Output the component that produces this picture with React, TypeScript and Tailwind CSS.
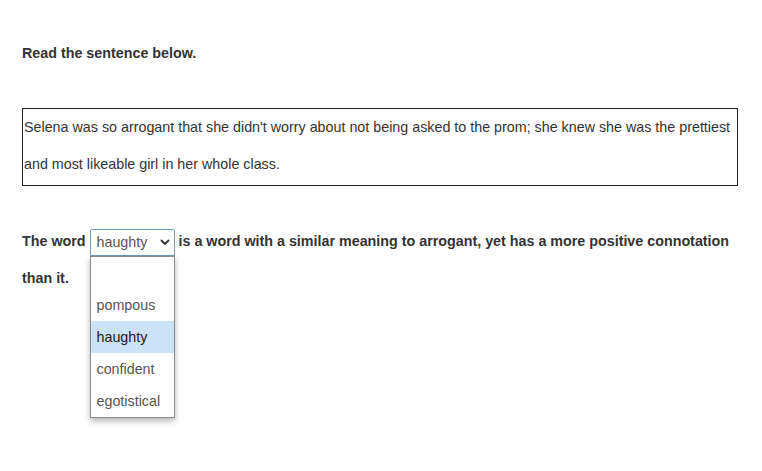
import React from 'react';

const options = ['', 'pompous', 'haughty', 'confident', 'egotistical'];

const WordSelect = ({ value }: { value: string }) => (
  <span className="relative inline-block align-middle">
    <span className="flex h-[27px] w-[85px] items-center justify-between rounded-t-[2px] border border-[#6f9db3] bg-white pl-[6px] pr-[3px] font-normal text-[#555]">
      <span>{value}</span>
      <svg width="12" height="12" viewBox="0 0 12 12" className="text-[#333]">
        <path d="M2.5 4.5 L6 8 L9.5 4.5" fill="none" stroke="currentColor" strokeWidth="1.8" strokeLinecap="round" strokeLinejoin="round" />
      </svg>
    </span>
    <span className="absolute left-0 top-[27px] z-10 flex w-[85px] flex-col border border-[#8a8a8a] bg-white font-normal shadow-[0_3px_6px_rgba(0,0,0,0.3)]">
      {options.map((o, i) => (
        <span
          key={i}
          className={`block h-[32px] pl-[6px] leading-[32px] ${o === value ? 'bg-[#cce3f7] text-[#1a1a1a]' : 'text-[#555]'}`}
        >
          {o}
        </span>
      ))}
    </span>
  </span>
);

export default function App() {
  return (
    <div className="min-h-[471px] bg-white px-[22px] pt-[35px] font-['Liberation_Sans',Arial,sans-serif] text-[14.3px] leading-[37px] text-[#333]">
      <p className="font-bold">Read the sentence below.</p>
      <div className="mt-[36px] w-[716px] border border-[#222] pb-[2px] pl-[1px]">
        Selena was so arrogant that she didn't worry about not being asked to the prom; she knew she was the prettiest and most likeable girl in her whole class.
      </div>
      <p className="mt-[37px] w-[716px] font-bold">
        The word <WordSelect value="haughty" /> is a word with a similar meaning to arrogant, yet has a more positive connotation than it.
      </p>
    </div>
  );
}
